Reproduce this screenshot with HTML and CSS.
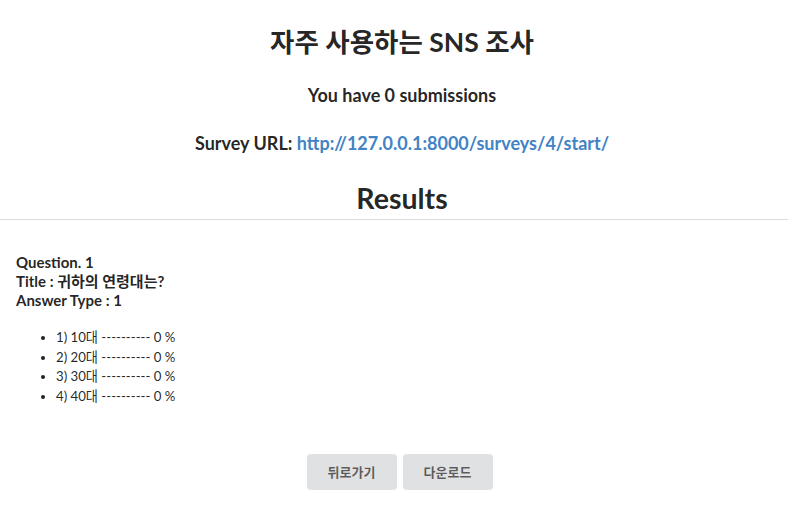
FILE: index.html
```html
<!DOCTYPE html>
<html lang="ko">
<head>
<meta charset="utf-8">
<link rel="stylesheet" href="styles.css">
</head>
<body>
<header class="head">
  <h1 class="title">자주 사용하는 SNS 조사</h1>
  <h3 class="sub">You have 0 submissions</h3>
  <h3 class="sub url">Survey URL: <a href="#">http://127.0.0.1:8000/surveys/4/start/</a></h3>
  <h2 class="results">Results</h2>
</header>
<hr class="divider">
<section class="question">
  <div class="qhead">
    <div>Question. 1</div>
    <div>Title : 귀하의 연령대는?</div>
    <div>Answer Type : 1</div>
  </div>
  <ul class="answers">
    <li>1) 10대 ---------- 0 %</li>
    <li>2) 20대 ---------- 0 %</li>
    <li>3) 30대 ---------- 0 %</li>
    <li>4) 40대 ---------- 0 %</li>
  </ul>
</section>
<div class="actions">
  <button class="btn">뒤로가기</button>
  <button class="btn">다운로드</button>
</div>
</body>
</html>
```
FILE: styles.css
```css
html, body {
  margin: 0;
  padding: 0;
  background: #fff;
}
body {
  font-family: Lato, "Noto Sans CJK KR", sans-serif;
  font-size: 14px;
  color: rgba(0, 0, 0, 0.87);
}
.head {
  text-align: center;
  padding: 24px 0 0 16px;
}
.title {
  margin: 0;
  font-size: 26.5px;
  line-height: 36px;
  font-weight: 700;
}
.sub {
  margin: 0;
  font-size: 18px;
  line-height: 24px;
  font-weight: 700;
}
.head .sub:first-of-type {
  margin-top: 23px;
}
.url {
  margin-top: 24px;
}
.url a {
  color: #4183c4;
  text-decoration: none;
}
.results {
  margin: 25px 0 0;
  font-size: 28.5px;
  line-height: 36px;
  font-weight: 700;
}
.divider {
  margin: 3px 0 0;
  border: 0;
  border-top: 1px solid #dcdcdc;
  height: 0;
}
.question {
  padding: 33px 16px 0;
}
.qhead {
  font-size: 15px;
  font-weight: 700;
  line-height: 19px;
}
.answers {
  margin: 18px 0 0;
  padding-left: 40px;
  font-size: 13.2px;
  line-height: 19.7px;
}
.actions {
  display: flex;
  justify-content: center;
  gap: 6px;
  padding-left: 11px;
  margin-top: 47px;
}
.btn {
  font-family: Lato, "Noto Sans CJK KR", sans-serif;
  font-size: 13px;
  font-weight: 700;
  color: rgba(0, 0, 0, 0.6);
  background: #e0e1e2;
  border: 0;
  border-radius: 4px;
  height: 36px;
  width: 90px;
  padding: 0;
}
```
